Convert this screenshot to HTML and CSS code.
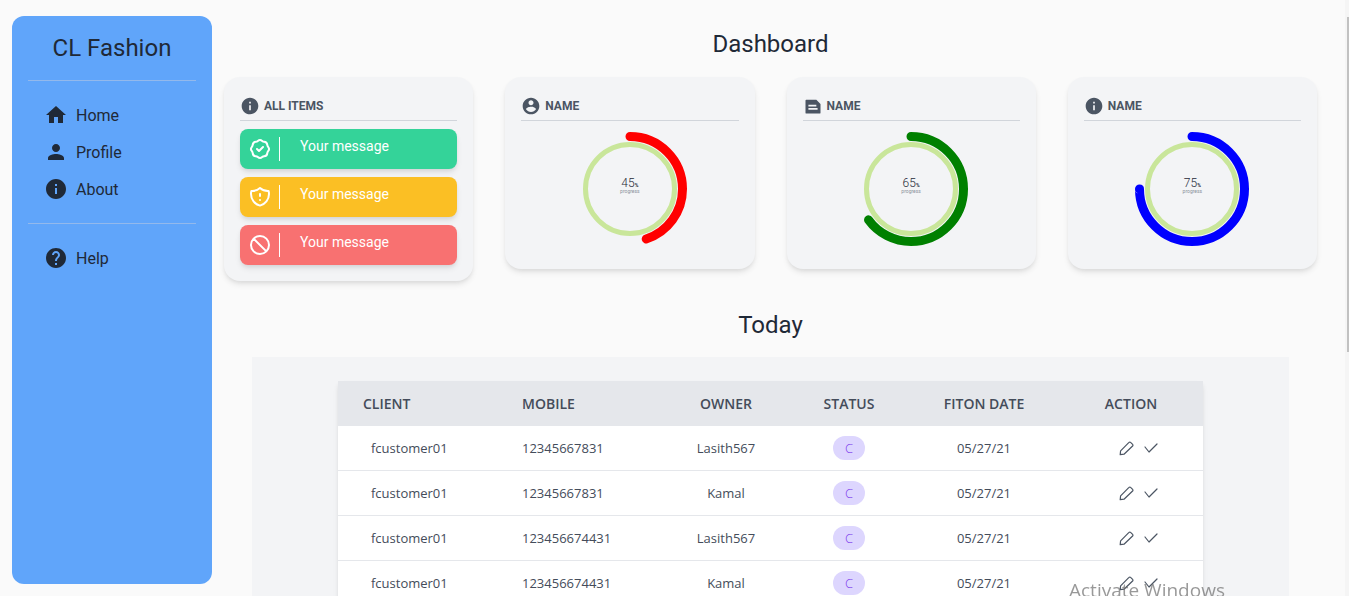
FILE: index.html
```html
<!DOCTYPE html>
<html>
<head>
    <title>CL Fashion</title>
    <link rel="stylesheet" href="styles.css">
</head>
<body>
    <div class="app">
        <aside class="sidebar">
            <h1 class="brand">CL Fashion</h1>
            <nav class="nav-group">
                <a class="nav-item">
                    <svg class="nav-icon" viewBox="0 0 24 24"><path d="M10 20v-6h4v6h5v-8h3L12 3 2 12h3v8z"/></svg>
                    Home
                </a>
                <a class="nav-item">
                    <svg class="nav-icon" viewBox="0 0 24 24"><path d="M12 12c2.21 0 4-1.79 4-4s-1.79-4-4-4-4 1.79-4 4 1.79 4 4 4zm0 2c-2.67 0-8 1.34-8 4v2h16v-2c0-2.66-5.33-4-8-4z"/></svg>
                    Profile
                </a>
                <a class="nav-item">
                    <svg class="nav-icon" viewBox="0 0 24 24"><path d="M12 2C6.48 2 2 6.48 2 12s4.48 10 10 10 10-4.48 10-10S17.52 2 12 2zm1 15h-2v-6h2v6zm0-8h-2V7h2v2z"/></svg>
                    About
                </a>
            </nav>
            <nav class="nav-group">
                <a class="nav-item">
                    <svg class="nav-icon" viewBox="0 0 24 24"><path d="M12 2C6.48 2 2 6.48 2 12s4.48 10 10 10 10-4.48 10-10S17.52 2 12 2zm1 17h-2v-2h2v2zm2.07-7.75l-.9.92C13.45 12.9 13 13.5 13 15h-2v-.5c0-1.1.45-2.1 1.17-2.83l1.24-1.26c.37-.36.59-.86.59-1.41 0-1.1-.9-2-2-2s-2 .9-2 2H8c0-2.21 1.79-4 4-4s4 1.79 4 4c0 .88-.36 1.68-.93 2.25z"/></svg>
                    Help
                </a>
            </nav>
        </aside>

        <main class="main">
            <h2 class="page-title">Dashboard</h2>
            <section class="cards">
                <div class="card">
                    <div class="card-head">
                        <svg class="head-icon" viewBox="0 0 24 24"><path d="M12 2C6.48 2 2 6.48 2 12s4.48 10 10 10 10-4.48 10-10S17.52 2 12 2zm1 15h-2v-6h2v6zm0-8h-2V7h2v2z"/></svg>
                        ALL ITEMS
                    </div>
                    <div class="alert alert-green">
                        <svg class="alert-icon" viewBox="0 0 24 24"><path d="M9 12l2 2 4-4M7.835 4.697a3.42 3.42 0 001.946-.806 3.42 3.42 0 014.438 0 3.42 3.42 0 001.946.806 3.42 3.42 0 013.138 3.138 3.42 3.42 0 00.806 1.946 3.42 3.42 0 010 4.438 3.42 3.42 0 00-.806 1.946 3.42 3.42 0 01-3.138 3.138 3.42 3.42 0 00-1.946.806 3.42 3.42 0 01-4.438 0 3.42 3.42 0 00-1.946-.806 3.42 3.42 0 01-3.138-3.138 3.42 3.42 0 00-.806-1.946 3.42 3.42 0 010-4.438 3.42 3.42 0 00.806-1.946 3.42 3.42 0 013.138-3.138z"/></svg>
                        <span class="alert-text">Your message</span>
                    </div>
                    <div class="alert alert-yellow">
                        <svg class="alert-icon" viewBox="0 0 24 24"><path d="M20.618 5.984A11.955 11.955 0 0112 2.944a11.955 11.955 0 01-8.618 3.04A12.02 12.02 0 003 9c0 5.591 3.824 10.29 9 11.622 5.176-1.332 9-6.03 9-11.622 0-1.042-.133-2.052-.382-3.016zM12 9v2m0 4h.01"/></svg>
                        <span class="alert-text">Your message</span>
                    </div>
                    <div class="alert alert-red">
                        <svg class="alert-icon" viewBox="0 0 24 24"><path d="M18.364 18.364A9 9 0 005.636 5.636m12.728 12.728A9 9 0 015.636 5.636m12.728 12.728L5.636 5.636"/></svg>
                        <span class="alert-text">Your message</span>
                    </div>
                </div>

                <div class="card">
                    <div class="card-head">
                        <svg class="head-icon" viewBox="0 0 24 24"><path d="M12 2C6.48 2 2 6.48 2 12s4.48 10 10 10 10-4.48 10-10S17.52 2 12 2zm0 3c1.66 0 3 1.34 3 3s-1.34 3-3 3-3-1.34-3-3 1.34-3 3-3zm0 14.2c-2.5 0-4.71-1.28-6-3.22.03-1.99 4-3.08 6-3.08 1.99 0 5.97 1.09 6 3.08-1.29 1.94-3.5 3.22-6 3.22z"/></svg>
                        NAME
                    </div>
                    <div class="gauge">
                        <svg class="gauge-ring" viewBox="0 0 128 128">
                            <circle class="gauge-track" cx="64" cy="64" r="44.5"/>
                            <circle class="gauge-bar" cx="64" cy="64" r="52.5" pathLength="100" stroke="#ff0000" stroke-dasharray="45 100"/>
                        </svg>
                        <div class="gauge-label">
                            <div class="gauge-value">45<small>%</small></div>
                            <div class="gauge-caption">progress</div>
                        </div>
                    </div>
                </div>

                <div class="card">
                    <div class="card-head">
                        <svg class="head-icon" viewBox="0 0 24 24"><path fill-rule="evenodd" d="M4 4.5h12l5 5V20a1 1 0 0 1-1 1H4a1 1 0 0 1-1-1V5.500a1 1 0 0 1 1-1zm2.500 6v2h9.500v-2zm0 4v2h11v-2z"/></svg>
                        NAME
                    </div>
                    <div class="gauge">
                        <svg class="gauge-ring" viewBox="0 0 128 128">
                            <circle class="gauge-track" cx="64" cy="64" r="44.5"/>
                            <circle class="gauge-bar" cx="64" cy="64" r="52.5" pathLength="100" stroke="#008000" stroke-dasharray="65 100"/>
                        </svg>
                        <div class="gauge-label">
                            <div class="gauge-value">65<small>%</small></div>
                            <div class="gauge-caption">progress</div>
                        </div>
                    </div>
                </div>

                <div class="card">
                    <div class="card-head">
                        <svg class="head-icon" viewBox="0 0 24 24"><path d="M12 2C6.48 2 2 6.48 2 12s4.48 10 10 10 10-4.48 10-10S17.52 2 12 2zm1 15h-2v-6h2v6zm0-8h-2V7h2v2z"/></svg>
                        NAME
                    </div>
                    <div class="gauge">
                        <svg class="gauge-ring" viewBox="0 0 128 128">
                            <circle class="gauge-track" cx="64" cy="64" r="44.5"/>
                            <circle class="gauge-bar" cx="64" cy="64" r="52.5" pathLength="100" stroke="#0000ff" stroke-dasharray="75 100"/>
                        </svg>
                        <div class="gauge-label">
                            <div class="gauge-value">75<small>%</small></div>
                            <div class="gauge-caption">progress</div>
                        </div>
                    </div>
                </div>
            </section>

            <h2 class="page-title today-title">Today</h2>
            <section class="table-wrap">
                <table class="orders">
                    <colgroup>
                        <col class="col-client">
                        <col class="col-mobile">
                        <col class="col-owner">
                        <col class="col-status">
                        <col class="col-date">
                        <col class="col-action">
                    </colgroup>
                    <thead>
                        <tr>
                            <th class="left">CLIENT</th>
                            <th class="left">MOBILE</th>
                            <th>OWNER</th>
                            <th>STATUS</th>
                            <th>FITON DATE</th>
                            <th>ACTION</th>
                        </tr>
                    </thead>
                    <tbody>
                        <tr>
                            <td class="client">fcustomer01</td>
                            <td class="left">12345667831</td>
                            <td>Lasith567</td>
                            <td><span class="pill">C</span></td>
                            <td>05/27/21</td>
                            <td class="actions">
                                <svg class="act-icon" viewBox="0 0 16 16"><path d="M1.6 10.8 10 2.4a1.1 1.1 0 0 1 1.6 0l2 2a1.1 1.1 0 0 1 0 1.6L5 14.2l-3.8.4z"/></svg>
                                <svg class="act-icon" viewBox="0 0 16 16"><path d="M2 7l4 5 8-8"/></svg>
                            </td>
                        </tr>
                        <tr>
                            <td class="client">fcustomer01</td>
                            <td class="left">12345667831</td>
                            <td>Kamal</td>
                            <td><span class="pill">C</span></td>
                            <td>05/27/21</td>
                            <td class="actions">
                                <svg class="act-icon" viewBox="0 0 16 16"><path d="M1.6 10.8 10 2.4a1.1 1.1 0 0 1 1.6 0l2 2a1.1 1.1 0 0 1 0 1.6L5 14.2l-3.8.4z"/></svg>
                                <svg class="act-icon" viewBox="0 0 16 16"><path d="M2 7l4 5 8-8"/></svg>
                            </td>
                        </tr>
                        <tr>
                            <td class="client">fcustomer01</td>
                            <td class="left">123456674431</td>
                            <td>Lasith567</td>
                            <td><span class="pill">C</span></td>
                            <td>05/27/21</td>
                            <td class="actions">
                                <svg class="act-icon" viewBox="0 0 16 16"><path d="M1.6 10.8 10 2.4a1.1 1.1 0 0 1 1.6 0l2 2a1.1 1.1 0 0 1 0 1.6L5 14.2l-3.8.4z"/></svg>
                                <svg class="act-icon" viewBox="0 0 16 16"><path d="M2 7l4 5 8-8"/></svg>
                            </td>
                        </tr>
                        <tr>
                            <td class="client">fcustomer01</td>
                            <td class="left">123456674431</td>
                            <td>Kamal</td>
                            <td><span class="pill">C</span></td>
                            <td>05/27/21</td>
                            <td class="actions">
                                <svg class="act-icon" viewBox="0 0 16 16"><path d="M1.6 10.8 10 2.4a1.1 1.1 0 0 1 1.6 0l2 2a1.1 1.1 0 0 1 0 1.6L5 14.2l-3.8.4z"/></svg>
                                <svg class="act-icon" viewBox="0 0 16 16"><path d="M2 7l4 5 8-8"/></svg>
                            </td>
                        </tr>
                    </tbody>
                </table>
            </section>
        </main>
    </div>

    <div class="scroll-track"><div class="scroll-thumb"></div></div>
    <div class="watermark">Activate Windows</div>
</body>
</html>
```

FILE: styles.css
```css
html, body {
    height: 100%;
    overflow: hidden;
}

body {
    margin: 0;
    background-color: #fafafa;
    font-family: Roboto, "Liberation Sans", sans-serif;
    color: #1f2937;
}

.app {
    display: flex;
    height: 100vh;
    overflow: hidden;
}

/* sidebar */
.sidebar {
    flex: none;
    width: 200px;
    margin: 16px 0 12px 12px;
    padding: 16px;
    box-sizing: border-box;
    background-color: #60a5fa;
    border-radius: 12px;
}

.brand {
    margin: 0;
    padding-bottom: 16px;
    border-bottom: 1px solid #93b9ec;
    font-size: 24px;
    font-weight: 400;
    line-height: 32px;
    text-align: center;
}

.nav-group {
    display: flex;
    flex-direction: column;
    gap: 5px;
    padding: 18px 16px;
}

.nav-group + .nav-group {
    border-top: 1px solid #93b9ec;
}

.nav-item {
    display: flex;
    align-items: center;
    gap: 8px;
    height: 32px;
    font-size: 16px;
}

.nav-icon {
    width: 24px;
    height: 24px;
    fill: #1f2937;
}

/* main column */
.main {
    flex: 1;
    min-width: 0;
    padding: 28px 32px 0 12px;
}

.page-title {
    margin: 0;
    font-size: 24px;
    font-weight: 400;
    line-height: 32px;
    text-align: center;
    color: #1f2937;
}

.today-title {
    margin-top: 28px;
}

.cards {
    display: grid;
    grid-template-columns: repeat(4, 1fr);
    gap: 32px;
    align-items: start;
    margin-top: 17px;
}

.card {
    padding: 16px;
    background-color: #f3f4f6;
    border-radius: 16px;
    box-shadow: 0 4px 6px -1px rgba(0, 0, 0, 0.1), 0 2px 4px -1px rgba(0, 0, 0, 0.06);
}

.card-head {
    display: flex;
    align-items: center;
    gap: 4px;
    height: 25px;
    padding-bottom: 2px;
    border-bottom: 1px solid #d1d5db;
    font-size: 12px;
    font-weight: 700;
    color: #4b5563;
}

.head-icon {
    width: 20px;
    height: 20px;
    fill: #4b5563;
}

/* alerts */
.alert {
    display: flex;
    height: 40px;
    margin-top: 8px;
    padding: 8px 0 8px 8px;
    box-sizing: border-box;
    border-radius: 8px;
    color: #fff;
    box-shadow: 0 4px 6px -1px rgba(0, 0, 0, 0.1), 0 2px 4px -1px rgba(0, 0, 0, 0.06);
}

.alert-green { background-color: #34d399; }
.alert-yellow { background-color: #fbbf24; }
.alert-red { background-color: #f87171; }

.alert-icon {
    flex: none;
    width: 24px;
    height: 24px;
    padding-right: 7px;
    border-right: 1px solid #fff;
    fill: none;
    stroke: #fff;
    stroke-width: 2;
    stroke-linecap: round;
    stroke-linejoin: round;
}

.alert-text {
    margin-left: 20px;
    font-size: 14px;
    line-height: 18px;
}

/* gauges */
.gauge {
    position: relative;
    width: 128px;
    height: 128px;
    margin: 4px auto 0;
}

.gauge-ring {
    display: block;
    width: 128px;
    height: 128px;
    transform: rotate(-90deg);
}

.gauge-track {
    fill: none;
    stroke: #c9e69a;
    stroke-width: 5;
}

.gauge-bar {
    fill: none;
    stroke-width: 9;
    stroke-linecap: round;
}

.gauge-label {
    position: absolute;
    left: 0;
    right: 0;
    top: 53px;
    text-align: center;
}

.gauge-value {
    font-size: 12px;
    font-weight: 300;
    line-height: 10px;
    color: #1f2937;
}

.gauge-value small {
    font-size: 5px;
    font-weight: 700;
    line-height: 0;
}

.gauge-caption {
    font-size: 5px;
    line-height: 6px;
    color: #8b929c;
}

/* table */
.table-wrap {
    width: 1037px;
    margin: 16px auto 0;
    padding: 24px 0;
    box-sizing: border-box;
    background-color: #f3f4f6;
}

.orders {
    width: 865px;
    margin: 0 auto;
    border-collapse: collapse;
    table-layout: fixed;
    background-color: #fff;
    font-family: "Open Sans", "Noto Sans", sans-serif;
    font-size: 13px;
    color: #444c5a;
    box-shadow: 0 4px 6px -1px rgba(0, 0, 0, 0.1), 0 2px 4px -1px rgba(0, 0, 0, 0.06);
}

.col-client { width: 159px; }
.col-mobile { width: 166px; }
.col-owner { width: 126px; }
.col-status { width: 120px; }
.col-date { width: 150px; }
.col-action { width: 144px; }

.orders th {
    height: 45px;
    padding: 0;
    background-color: #e5e7eb;
    font-size: 14px;
    font-weight: 600;
    text-align: center;
}

.orders td {
    height: 44px;
    padding: 0;
    border-bottom: 1px solid #e5e7eb;
    text-align: center;
}

.orders th.left,
.orders td.left {
    padding-left: 25px;
    text-align: left;
}

.orders td.client {
    padding-left: 33px;
    text-align: left;
}

.pill {
    display: inline-block;
    width: 32px;
    height: 24px;
    border-radius: 12px;
    background-color: #ddd6fe;
    color: #7c3aed;
    font-size: 13px;
    font-weight: 300;
    line-height: 24px;
    vertical-align: middle;
}

.orders td.actions {
    padding-left: 16px;
    white-space: nowrap;
    font-size: 0;
}

.act-icon {
    width: 16px;
    height: 16px;
    margin: 0 4px;
    vertical-align: middle;
    fill: none;
    stroke: #4b5563;
    stroke-width: 1.2;
    stroke-linecap: round;
    stroke-linejoin: round;
}

/* browser chrome on top of the page */
.scroll-track {
    position: fixed;
    top: 0;
    right: 0;
    bottom: 0;
    width: 4px;
    background-color: #f5f5f5;
}

.scroll-thumb {
    height: 335px;
    margin: 17px 0 0 2px;
    background-color: #c1c1c1;
}

.watermark {
    position: fixed;
    left: 1069px;
    top: 578px;
    font-family: "Open Sans", sans-serif;
    font-size: 19px;
    line-height: 24px;
    white-space: nowrap;
    color: rgba(110, 110, 110, 0.7);
}
```
